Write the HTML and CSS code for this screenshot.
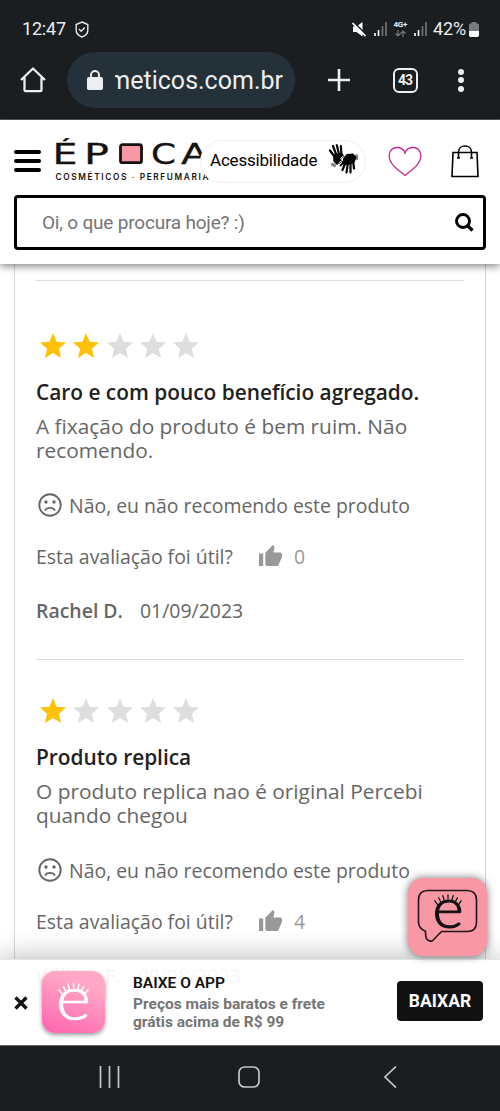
FILE: index.html
```html
<!DOCTYPE html>
<html lang="pt-BR">
<head>
<meta charset="utf-8">
<title>Época Cosméticos</title>
<link rel="stylesheet" href="styles.css">
</head>
<body>
<svg class="defs" width="0" height="0">
  <symbol id="star" viewBox="0 0 26 25"><path d="M13 0l3.6 8.7 9.4.8-7.1 6.2 2.1 9.2-8-4.9-8 4.9 2.1-9.2L0 9.5l9.4-.8z" fill="currentColor"/></symbol>
  <symbol id="sad" viewBox="0 0 24 24"><circle cx="12" cy="12" r="10.7" fill="none" stroke="currentColor" stroke-width="1.9"/><circle cx="8" cy="9" r="1.7" fill="currentColor"/><circle cx="16" cy="9" r="1.7" fill="currentColor"/><path d="M7 17.5c1.8-3.4 8.2-3.4 10 0" fill="none" stroke="currentColor" stroke-width="1.7"/></symbol>
  <symbol id="thumb" viewBox="0 0 23 21"><path d="M0 8.5h4.2V21H0zM23 9.5c0-1.2-.9-2-2-2h-6.600l1-4.800c.1-.7 0-1.100-.5-1.600L13.800 0 7 7c-.5.500-.7.900-.7 1.500V19c0 1.200.9 2 2 2h9.400c.9 0 1.600-.5 1.900-1.300l3.200-7.400c.1-.3.200-.5.200-.8z" fill="currentColor"/></symbol>
  <symbol id="lashes" viewBox="0 0 34 14"><g fill="none" stroke="currentColor" stroke-linecap="round"><path d="M1.500 8l3 4M6 4.500l2.500 4.500M11 2l1.300 4.500M17 1v4.500M23 2l-1.300 4.500M28 4.500L25.500 9M32.500 8l-3 4"/></g></symbol>
</svg>
<div class="phone">
  <div class="system">
    <div class="status">
      <span class="clock">12:47</span>
      <svg class="shield" width="14" height="17" viewBox="0 0 14 17" fill="none" stroke="#e8eaec" stroke-width="1.400"><path d="M7 1l5.800 2.500V9.500c0 2.700-2.500 5.200-5.800 6.500-3.300-1.300-5.800-3.800-5.800-6.500v-6z"/><path d="M4 8l2.200 2.200 3.600-3.600"/></svg>
      <div class="indicators">
        <svg width="15" height="15" viewBox="0 0 15 15"><path d="M1 4.500h3.500L10.500 0v14.500l-6-4.500H1z" fill="#fff"/><path d="M1.500 0l13 13" stroke="#1a1e21" stroke-width="1.600"/><path d="M.5 1l13 13" stroke="#fff" stroke-width="1.700"/></svg>
        <svg class="bars" width="13" height="14" viewBox="0 0 13 14"><path d="M1 11v3M4.500 8v6" stroke="#fff" stroke-width="1.600"/><path d="M8.500 4v10M12 0v14" stroke="#73777a" stroke-width="1.600"/></svg>
        <span class="network"><b>4G+</b><svg width="11" height="7" viewBox="0 0 11 7" fill="none" stroke="#73777a" stroke-width="1.200"><path d="M3 0v6M.5 3.500L3 6l2.500-2.500M8 7V1M5.500 3.500L8 1l2.500 2.500"/></svg></span>
        <svg class="bars second" width="13" height="14" viewBox="0 0 13 14"><path d="M1 11v3M4.500 8v6" stroke="#fff" stroke-width="1.600"/><path d="M8.500 4v10M12 0v14" stroke="#73777a" stroke-width="1.600"/></svg>
        <span class="percent">42%</span>
        <svg width="10" height="15" viewBox="0 0 10 15"><path d="M2.500 0h5v1.500H9l1 1V9H0V2.500l1-1h1.500z" fill="#777b7e"/><path d="M0 9h10v4.500L9 15H1l-1-1.500z" fill="#fff"/></svg>
      </div>
    </div>
    <div class="browser">
      <svg class="home" width="26" height="26" viewBox="0 0 26 26" fill="none" stroke="#eceef0" stroke-width="2.300" stroke-linejoin="round"><path d="M1 13L13 1.500 25 13M4.500 10.500V23q0 1.200 1.200 1.200h14.600q1.200 0 1.200-1.200V10.500"/></svg>
      <div class="address">
        <svg width="16" height="20" viewBox="0 0 16 20"><rect y="7" width="16" height="13" rx="1.800" fill="#eceef0"/><path d="M4 8V5a4 4 0 018 0v3" fill="none" stroke="#eceef0" stroke-width="1.900"/></svg>
        <div class="url"><span>meticos.com.br</span></div>
      </div>
      <svg class="plus" width="22" height="22" viewBox="0 0 22 22"><path d="M11 0v22M0 11h22" stroke="#eceef0" stroke-width="2.600"/></svg>
      <div class="tabs">43</div>
      <div class="dots"><i></i><i></i><i></i></div>
    </div>
  </div>

  <header class="header">
    <div class="brandbar">
      <div class="burger"><i></i><i></i><i></i></div>
      <svg class="logo" width="160" height="46" viewBox="0 0 160 46">
        <g class="logo-name">
          <text x="-1.500" y="26" textLength="25" lengthAdjust="spacingAndGlyphs">É</text>
          <text x="30" y="26" textLength="25" lengthAdjust="spacingAndGlyphs">P</text>
          <text x="97" y="26" textLength="25" lengthAdjust="spacingAndGlyphs">C</text>
          <text x="127" y="26" textLength="27" lengthAdjust="spacingAndGlyphs">A</text>
        </g>
        <rect x="66.500" y="6.700" width="21" height="18" rx="2" fill="#f798a4" stroke="#17120f" stroke-width="2.800"/>
        <text class="logo-tag" x="1.500" y="41.500" textLength="153">COSMÉTICOS · PERFUMARIA</text>
      </svg>
      <div class="access">
        <span>Acessibilidade</span>
        <svg width="32" height="32" viewBox="0 0 32 32" fill="none" stroke="#050505" stroke-linecap="round" stroke-linejoin="round"><path d="M4.500 20.500l2 1M28.500 12v2.500" stroke="#858891" stroke-width="3.400"/><path d="M6 12L2 6.500M8 10L5 2M11 10L8.800 1.200M13.500 10l-.7-8M25 16l1 8.500M22.500 18v10.500M20 18l-1.500 10.500M18 17l-3.500 9" stroke-width="2.200"/><path d="M6 11l7-1.500L16 12l-4 3 2 2-5 3-3-3z" fill="#050505" stroke-width="1.500"/><path d="M15.500 15.500L19 11l6-.5 2.500 3-2 5-7 1.500-3-1-3 2.500" fill="#050505" stroke-width="1.800"/><path d="M18 10l-5.500 4.500 2.500 1.300-4 3" stroke="#fff" stroke-width=".9"/></svg>
      </div>
      <svg class="heart" width="34" height="31" viewBox="0 0 34 31"><path d="M17 29.500C12 25 1.200 19 1.200 9.800c0-5 3.300-8.300 7.600-8.300 3.700 0 7 2 8.200 5.500 1.200-3.500 4.500-5.500 8.200-5.500 4.300 0 7.600 3.300 7.600 8.300C32.800 19 22 25 17 29.500z" fill="none" stroke="#c42b92" stroke-width="1.300"/></svg>
      <svg class="bag" width="28" height="33" viewBox="0 0 28 33" fill="none" stroke="#000" stroke-width="1.600"><path d="M2 7.500h24l1 24H1zM7.500 13V7c0-8 13-8 13 0v6"/><path d="M6 13h3M19 13h3"/></svg>
    </div>
    <div class="search">
      <span>Oi, o que procura hoje? :)</span>
      <svg width="19" height="19" viewBox="0 0 19 19" fill="none" stroke="#000"><circle cx="8" cy="8" r="6.500" stroke-width="2.900"/><path d="M12.500 12.500l5 5" stroke-width="3.200"/></svg>
    </div>
  </header>

  <main class="content">
    <section class="reviews">
      <article class="review">
        <div class="stars"><svg class="on"><use href="#star"/></svg><svg class="on"><use href="#star"/></svg><svg><use href="#star"/></svg><svg><use href="#star"/></svg><svg><use href="#star"/></svg></div>
        <h3>Caro e com pouco benefício agregado.</h3>
        <p class="text">A fixação do produto é bem ruim. Não<br>recomendo.</p>
        <p class="recommend"><svg><use href="#sad"/></svg><span>Não, eu não recomendo este produto</span></p>
        <p class="useful"><span>Esta avaliação foi útil?</span><svg><use href="#thumb"/></svg><em>0</em></p>
        <p class="author"><b>Rachel D.</b><span>01/09/2023</span></p>
      </article>
      <article class="review">
        <div class="stars"><svg class="on"><use href="#star"/></svg><svg><use href="#star"/></svg><svg><use href="#star"/></svg><svg><use href="#star"/></svg><svg><use href="#star"/></svg></div>
        <h3>Produto replica</h3>
        <p class="text">O produto replica nao é original Percebi<br>quando chegou</p>
        <p class="recommend"><svg><use href="#sad"/></svg><span>Não, eu não recomendo este produto</span></p>
        <p class="useful"><span>Esta avaliação foi útil?</span><svg><use href="#thumb"/></svg><em>4</em></p>
        <p class="author"><b>Willian F.</b><span>09/08/2023</span></p>
      </article>
    </section>
    <aside class="banner">
      <svg class="close" width="14" height="14" viewBox="0 0 14 14"><path d="M1.500 1.500l11 11M12.500 1.500l-11 11" stroke="#111" stroke-width="3.300"/></svg>
      <div class="app">
        <svg width="63" height="62" viewBox="0 0 63 62"><text class="mark" x="31.500" y="48.500" textLength="35" lengthAdjust="spacingAndGlyphs">e</text><use href="#lashes" x="15.500" y="11.500" width="32" height="13" stroke-width="1.700"/></svg>
      </div>
      <div class="pitch"><strong>BAIXE O APP</strong><span>Preços mais baratos e frete<br>grátis acima de R$ 99</span></div>
      <button class="download">BAIXAR</button>
    </aside>
    <div class="chat">
      <svg width="79" height="79" viewBox="0 0 79 79"><path d="M20 12.500h39q9.500 0 9.500 9.500v22q0 9.500-9.500 9.500H33.500l-9 9.200q-3.500 1.500-6-2-1-2-1-7.400Q10.500 50.500 10.500 44V22q0-9.500 9.500-9.500z" fill="none" stroke="#241318" stroke-width="1.600"/><text class="mark" x="40" y="50" textLength="31" lengthAdjust="spacingAndGlyphs">e</text><use href="#lashes" x="25.500" y="16" width="29" height="12" stroke-width="1.500"/></svg>
    </div>
  </main>

  <nav class="nav">
    <svg width="21" height="22" viewBox="0 0 21 22"><path d="M1.500 0v22M10.500 0v22M19.500 0v22" stroke="#c5c7c9" stroke-width="1.700"/></svg>
    <svg class="nav-home" width="22" height="22" viewBox="0 0 22 22"><rect x="1" y="1" width="20" height="20" rx="5.500" fill="none" stroke="#c5c7c9" stroke-width="1.700"/></svg>
    <svg width="13" height="22" viewBox="0 0 13 22"><path d="M12 .5L1 11l11 10.500" fill="none" stroke="#c5c7c9" stroke-width="1.700"/></svg>
  </nav>
</div>
</body>
</html>
```

FILE: styles.css
```css
* { box-sizing: border-box; }
body { margin: 0; background: #fff; font-family: Roboto, "Liberation Sans", sans-serif; }
p, h3 { margin: 0; }
svg { display: block; flex: none; }
.defs { position: absolute; }
.phone { width: 500px; height: 1111px; display: flex; flex-direction: column; overflow: hidden; }

.system { height: 120px; flex: none; background: #1a1e21; border-bottom: 1px solid #5b5e60; color: #eceef0; }
.status { height: 52px; padding: 6px 21px 0 22px; display: flex; align-items: center; }
.clock { font-size: 18px; line-height: 20px; letter-spacing: -.2px; }
.shield { margin-left: 9px; }
.indicators { display: flex; align-items: center; margin-left: auto; }
.bars { margin-left: 7px; }
.network { width: 15px; margin-left: 6px; display: flex; flex-direction: column; align-items: center; gap: 1px; }
.network b { font-size: 8px; line-height: 8px; letter-spacing: -.2px; }
.bars.second { margin-left: 6px; }
.percent { font-size: 18px; line-height: 20px; margin: 0 3px 0 6px; letter-spacing: -.1px; }
.browser { height: 56px; display: flex; align-items: center; padding-left: 20px; }
.address { width: 228px; height: 56px; margin-left: 21px; border-radius: 28px; background: #243139; display: flex; align-items: center; padding-left: 20px; }
.url { margin-left: 12px; width: 168px; overflow: hidden; display: flex; justify-content: flex-end; font-size: 25px; line-height: 38px; padding-top: 2px; white-space: nowrap; }
.plus { margin-left: 33px; }
.tabs { width: 25px; height: 25px; margin-left: 43px; border: 2.500px solid #eceef0; border-radius: 6px; font-size: 14px; font-weight: 700; line-height: 21px; text-align: center; letter-spacing: -1px; text-indent: -1px; }
.dots { margin-left: 40px; display: flex; flex-direction: column; gap: 2.500px; }
.dots i { width: 6px; height: 6px; border-radius: 50%; background: #eceef0; }

.header { height: 144px; flex: none; position: relative; z-index: 2; background: #fff; box-shadow: 0 2px 8px rgba(0,0,0,.5); padding: 0 14px; }
.brandbar { height: 75px; display: flex; align-items: center; padding-top: 7px; }
.burger { width: 27px; display: flex; flex-direction: column; gap: 5px; }
.burger i { height: 4px; border-radius: 2px; background: #000; }
.logo { margin-left: 13px; }
.logo-name { font: 27.500px "DejaVu Sans", sans-serif; fill: #17120f; stroke: #17120f; stroke-width: .3px; }
.logo-tag { font: 600 8.300px Inter, "Liberation Sans", sans-serif; fill: #17120f; }
.access { width: 166px; height: 43px; margin-left: -14px; border: 1px solid #eee; border-radius: 22px; background: #fff; display: flex; align-items: center; padding-left: 9px; font-size: 17px; letter-spacing: -.2px; color: #000; z-index: 1; }
.access span { line-height: 20px; padding-bottom: 3px; }
.access svg { margin: -3px 0 0 11px; }
.heart { margin-left: 22px; }
.bag { margin-left: 29px; }
.search { height: 55px; border: 3px solid #000; border-radius: 4px; display: flex; align-items: center; justify-content: space-between; padding: 0 9px 0 25px; color: #757575; font-size: 19px; letter-spacing: -.2px; }

.content { height: 781px; flex: none; position: relative; overflow: hidden; }
.reviews { margin: 0 14px; height: 100%; border: solid #d8d8d8; border-width: 0 1px; padding: 16px 21px 0; font-family: "Open Sans", sans-serif; color: #666; overflow: hidden; }
.review { height: 379px; border-top: 1px solid #ddd; padding-top: 52px; display: flex; flex-direction: column; }
.review + .review { height: 400px; padding-top: 38px; }
.stars { display: flex; gap: 7.300px; padding-left: 4px; color: #dedede; }
.stars svg { width: 26px; height: 25px; }
.stars .on { color: #ffc107; }
h3 { margin-top: 20px; font-size: 20.850px; font-weight: 600; line-height: 28px; color: #212121; white-space: nowrap; }
.text { margin-top: 8px; font-size: 20.850px; line-height: 24px; white-space: nowrap; }
.recommend { margin-top: 29px; height: 28px; display: flex; align-items: center; font-size: 19.450px; white-space: nowrap; }
.recommend svg { width: 24px; height: 24px; margin: 0 7px 0 2px; }
.useful { margin-top: 23px; height: 28px; display: flex; align-items: center; font-size: 19.450px; }
.useful span { width: 223px; white-space: nowrap; }
.useful svg { width: 23px; height: 21px; color: #999; margin-top: -2px; }
.useful em { margin-left: 12px; font-style: normal; color: #999; }
.author { margin-top: 26px; height: 28px; display: flex; align-items: center; gap: 17px; font-size: 19.450px; white-space: nowrap; }
.author b { font-weight: 600; }

.banner { position: absolute; left: 0; right: 0; bottom: 0; height: 86px; background: rgba(255,255,255,.94); border-top: 1px solid #e5e5e5; box-shadow: 0 0 28px rgba(0,0,0,.32); display: flex; align-items: center; padding: 0 17px 0 14px; }
.app { margin: -2px 0 0 14px; width: 63px; height: 62px; border-radius: 13px; background: linear-gradient(20deg, #ff62ae, #ffa7c6 75%); box-shadow: 0 2px 4px rgba(0,0,0,.4); color: #fff; }
.mark { font-family: Lato, sans-serif; font-weight: 300; font-size: 62px; fill: currentColor; stroke: currentColor; stroke-width: .7px; text-anchor: middle; }
.pitch { margin: -1px 0 0 28px; display: flex; flex-direction: column; font-weight: 700; color: #757575; font-size: 15.500px; line-height: 18.500px; white-space: nowrap; }
.pitch strong { color: #111; line-height: 20px; font-weight: 600; margin-bottom: 2px; }
.download { margin-left: auto; width: 86px; height: 40px; margin-top: -3px; padding: 0; border: 0; border-radius: 4px; background: #111; color: #fff; font: 700 17.500px Roboto, sans-serif; }
.chat { position: absolute; left: 408px; top: 614px; width: 79px; height: 78px; border-radius: 15px; background: #f798a4; box-shadow: 0 0 8px rgba(0,0,0,.55); color: #111; }
.chat .mark { font-size: 55px; stroke-width: 1.100px; }

.nav { height: 66px; flex: none; background: #1a1e21; border-top: 1px solid #65686a; display: flex; align-items: center; padding: 0 103px 3px 99px; }
.nav-home { margin: 0 auto 0 118px; }
```
